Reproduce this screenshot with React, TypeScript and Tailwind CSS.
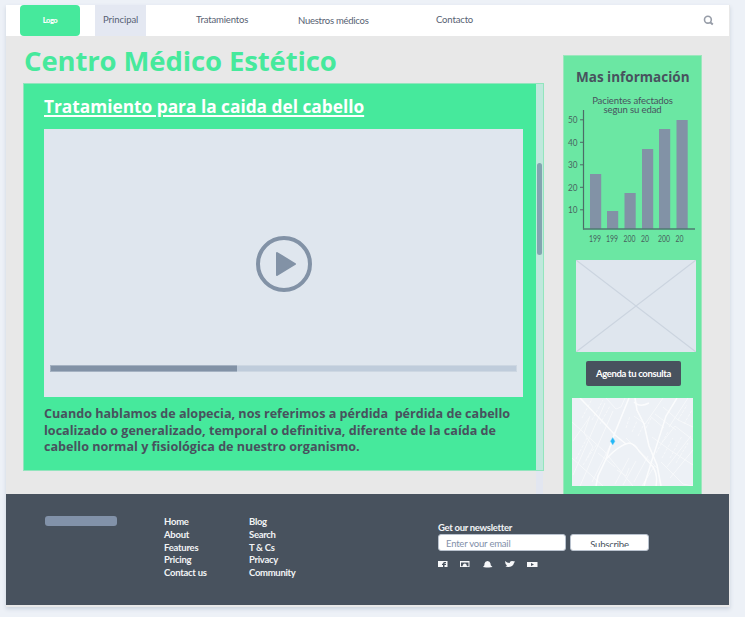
import React from 'react';

const lato = "font-['Lato','Liberation_Sans',sans-serif]";
const openSans = "font-['Open_Sans','Noto_Sans',sans-serif]";

function Header() {
  return (
    <header className="flex h-[31px] shrink-0 bg-white pl-[14px] text-[9.5px] text-[#576172]">
      <div className="flex h-[31px] w-[60px] items-center justify-center rounded-[4px] bg-[#46e99c] text-[7.5px] font-black tracking-[-0.5px] text-white">
        Logo
      </div>
      <nav className="flex flex-1 leading-[30px] tracking-[-0.15px] whitespace-nowrap">
        <a className="ml-[15px] w-[51px] bg-[#e4e8f2] pl-[8px] tracking-[-0.05px]">Principal</a>
        <a className="ml-[50px] w-[102px]">Tratamientos</a>
        <a className="w-[137px] pt-px tracking-[-0.25px]">Nuestros médicos</a>
        <a className="ml-[1px] w-[60px]">Contacto</a>
      </nav>
      <svg className="mt-[10px] mr-[15px] h-[11px] w-[11px]" viewBox="0 0 11 11" fill="none" stroke="#979da8">
        <circle cx="4.9" cy="4.7" r="3.4" strokeWidth="1.6" />
        <path d="M7.2 7.2 9.8 9.6" strokeWidth="2" />
      </svg>
    </header>
  );
}

function Player() {
  return (
    <div className="mt-[10px] flex h-[268px] w-[479px] flex-col items-center bg-[#dfe6ee] pt-[107px]">
      <svg className="h-[56px] w-[56px]" viewBox="0 0 56 56">
        <circle cx="28" cy="28" r="26" fill="none" stroke="#8292a6" strokeWidth="4" />
        <path d="M21 17 39 28 21 39Z" fill="#8292a6" stroke="#8292a6" strokeWidth="2" strokeLinejoin="round" />
      </svg>
      <div className="mt-[73px] h-[7px] w-[467px] border border-[#cdd7e2] bg-[#bfccdb]">
        <div className="-mt-px -ml-px h-[7px] w-[187px] border border-r-0 border-[#a5b2c2] bg-[#8292a6]" />
      </div>
    </div>
  );
}

function Article() {
  return (
    <article className="flex h-[388px] w-[521px] border border-[#92e5bd] bg-[#46e99c]">
      <div className={`w-[512px] pl-[20px] ${openSans}`}>
        <h2 className="mt-[10px] h-[25px] text-[17.3px] leading-[25px] font-bold whitespace-nowrap text-white underline decoration-[1.5px] underline-offset-[2px]">
          Tratamiento para la caida del cabello
        </h2>
        <Player />
        <p className="mt-[9px] text-[12.6px] leading-[16.6px] font-bold whitespace-pre text-[#48525e]">
          {'Cuando hablamos de alopecia, nos referimos a pérdida  pérdida de cabello\nlocalizado o generalizado, temporal o definitiva, diferente de la caída de\ncabello normal y fisiológica de nuestro organismo.'}
        </p>
      </div>
      <div className="h-[386px] w-[7px] bg-[#bfe8dc] pt-[79px] pl-[1px]">
        <div className="h-[92px] w-[5px] rounded-[3px] bg-[#83a4b0]" />
      </div>
    </article>
  );
}

const bars = [
  { x: 26, y: 74, label: '199' },
  { x: 43, y: 111, label: '199' },
  { x: 60.5, y: 93, label: '200' },
  { x: 78, y: 49, label: '20' },
  { x: 95, y: 29, label: '200' },
  { x: 112.5, y: 20, label: '20' },
];

const ticks = [50, 40, 30, 20, 10];

function Chart() {
  return (
    <svg className={`h-[149px] w-[137px] ${lato}`} viewBox="0 0 137 149">
      {bars.map((b) => (
        <rect key={b.x} x={b.x} y={b.y} width="11.2" height={129 - b.y} fill="#8292a6" />
      ))}
      <path d="M19.5 10V129.5" stroke="#4d6b67" strokeWidth="1.2" />
      <path d="M19 129H131" stroke="#4e7a70" strokeWidth="1.4" />
      {ticks.map((t, i) => (
        <g key={t}>
          <path d={`M16 ${19.8 + i * 22.5}H19.5`} stroke="#4d6b67" />
          <text x="4" y={23.3 + i * 22.5} fontSize="9.3" textLength="9.5" lengthAdjust="spacingAndGlyphs" fill="#48645f">{t}</text>
        </g>
      ))}
      {bars.map((b) => (
        <text key={b.x} x={b.x - 1} y="142" fontSize="9.3" textLength={b.label.length === 3 ? 12 : 8} lengthAdjust="spacingAndGlyphs" fill="#48645f">{b.label}</text>
      ))}
    </svg>
  );
}

function CityMap() {
  return (
    <svg className="mt-[12px] ml-[8px] h-[88px] w-[121px] bg-[#edf1f6]" viewBox="0 0 121 88" fill="none" stroke="#fff">
      <g strokeWidth="1" opacity="0.55">
        <path d="M34 0 44 11 49 9 53 0M0 24 32 53 61 88M0 60 31 88M1 43 17 20M1 77 33 5M8 88 41 13M14 62 21 49 12 35 18 18M20 84 38 48M26 55 43 69M54 40 85 70M62 18 73 26 91 0M78 18 92 30M89 46 103 28 121 42M97 29 116 0M94 70 119 38M98 80 121 52M89 64 111 86 121 88M43 86 57 60M51 87 64 63M62 84 76 58M70 88 83 67M80 39 98 52 121 67M91 9 106 22 121 29M83 16 104 32M45 72 54 78 57 70" />
        <path d="M10 20 20 1M20 22 31 2M28 26 38 8M4 61 15 40M11 67 25 46M54 30 58 18M60 34 65 23M66 38 71 28M74 30 79 20M84 55 96 34M90 60 101 40M98 60 110 38M104 65 116 45M106 22 115 7M112 26 120 12" strokeDasharray="3 1.2" />
      </g>
      <g strokeWidth="1.6" opacity="0.8">
        <path d="M8 0 32 25 43 37 54 46M57 0 42 37 34 61 26 78 24 88M63 0 65 12 72 26 77 48 85 67 89 88" />
        <path d="M34 61Q47 47 57 45 63 46 67 53L81 69Q86 77 84 88M105 0 94 18 88 37 80 62 72 88M62 4Q68 10 77 5" strokeWidth="1.5" />
      </g>
      <path d="M40.7 39.5 43 43.2 40.7 47 38.4 43.2Z" fill="#22b8f7" stroke="#83d3f7" strokeWidth=".5" />
    </svg>
  );
}

function Sidebar() {
  return (
    <aside className="ml-[19px] mt-[19px] flex h-[439px] w-[139px] flex-col border border-b-0 border-[#9ce7bd] bg-[#6be7a3]">
      <h3 className={`mt-[11px] ml-[12px] h-[20px] text-[13.5px] leading-[20px] font-bold whitespace-nowrap text-[#48525e] ${openSans}`}>
        Mas información
      </h3>
      <p className="mt-[10px] text-center text-[9.5px] leading-[8.5px] tracking-[-0.1px] text-[#48525e]">
        Pacientes afectados<br />segun su edad
      </p>
      <div className="-mt-[14px] h-[149px] shrink-0">
        <Chart />
      </div>
      <svg className="mt-[11px] ml-[12px] h-[92px] w-[120px] shrink-0 bg-[#dfe6ee]" viewBox="0 0 120 92" stroke="#cbd4df" strokeWidth="1.2">
        <path d="M0 0 120 92M120 0 0 92" />
      </svg>
      <button className="mt-[9px] ml-[22px] h-[25px] w-[95px] shrink-0 rounded-[2px] bg-[#48525e] text-[9.5px] leading-[23px] font-bold tracking-[-0.35px] text-white">
        Agenda tu consulta
      </button>
      <CityMap />
    </aside>
  );
}

function Social() {
  return (
    <svg className="mt-[9px] h-[8px] w-[100px]" viewBox="0 0 100 8" fill="#f7f8fa">
      <path d="M0 1h9.5v6H6.5V5H8V3.8H6.5V3H8V2H6.2Q5 2 5 3.8H4V5h1v2H0Z" />
      <path fillRule="evenodd" d="M22 1h9.5v6H22ZM23 2.500v3.800h1.500a2.200 2.200 0 1 1 4.500 0h1.500V2.500Z" />
      <circle cx="26.800" cy="4.700" r="1.300" />
      <path d="M45 7Q47 5 46.5 3.5 47 1 49.5 1T52.5 3.5Q52 5 54.5 7L51 7.5H48Z" />
      <path d="M67 1Q69 3 71.5 3 72 1 74 1L77 1.5 76 3Q75 7 70 7L67.5 6.5 69 5.5Q67 4 67 1Z" />
      <path fillRule="evenodd" d="M89 2h10.5v5H89ZM93 3v3l3-1.5Z" />
    </svg>
  );
}

function Footer() {
  return (
    <footer className="flex h-[111px] shrink-0 bg-[#48525e] text-[9.5px] font-bold text-[#f2f4f6]">
      <div className="mt-[22px] ml-[39px] h-[10px] w-[72px] rounded-[3px] bg-[#8292a9]" />
      <ul className="mt-[22px] ml-[47px] w-[85px] leading-[12.8px] tracking-[-0.25px] whitespace-nowrap">
        <li>Home</li><li>About</li><li>Features</li><li>Pricing</li><li>Contact us</li>
      </ul>
      <ul className="mt-[22px] w-[189px] leading-[12.8px] tracking-[-0.3px] whitespace-nowrap">
        <li>Blog</li><li>Search</li><li>T &amp; Cs</li><li>Privacy</li><li>Community</li>
      </ul>
      <div className="mt-[27px]">
        <div className="h-[13px] leading-[13px] tracking-[-0.3px]">Get our newsletter</div>
        <div className="flex gap-[4px]">
          <div className="h-[17px] w-[128px] rounded-[3px] border border-[#b9c2ce] bg-white pl-[7px] text-[9.5px] leading-[17px] font-normal tracking-[-0.2px] text-[#8290a9]">
            <div className="h-[12px] overflow-hidden">Enter your email</div>
          </div>
          <div className="h-[17px] w-[79px] rounded-[3px] border border-[#b9c2ce] bg-white pt-[4px] text-center text-[9.5px] font-normal tracking-[-0.2px] text-[#48525e]">
            <div className="h-[8px] overflow-hidden leading-[12px]">Subscribe</div>
          </div>
        </div>
        <Social />
      </div>
    </footer>
  );
}

export default function App() {
  return (
    <div className={`h-[617px] w-[745px] overflow-hidden bg-[#edf1f7] pt-[5px] pl-[6px] ${lato}`}>
      <div className="flex h-[602px] w-[724px] flex-col bg-[#e8e8e8] shadow-[0_2px_4px_#cbd3de]">
        <div className="w-[723px]">
          <Header />
          <main className="flex h-[458px] pl-[17px]">
            <section className="w-[521px]">
              <h1 className={`h-[47px] pt-[4px] pl-px text-[27.5px] leading-[42px] font-bold tracking-[-0.13px] whitespace-nowrap text-[#46e99c] ${openSans}`}>
                Centro Médico Estético
              </h1>
              <Article />
              <div className="mr-px ml-auto h-[23px] w-[7px] bg-[#e2e6f0]" />
            </section>
            <Sidebar />
          </main>
          <Footer />
        </div>
      </div>
    </div>
  );
}
